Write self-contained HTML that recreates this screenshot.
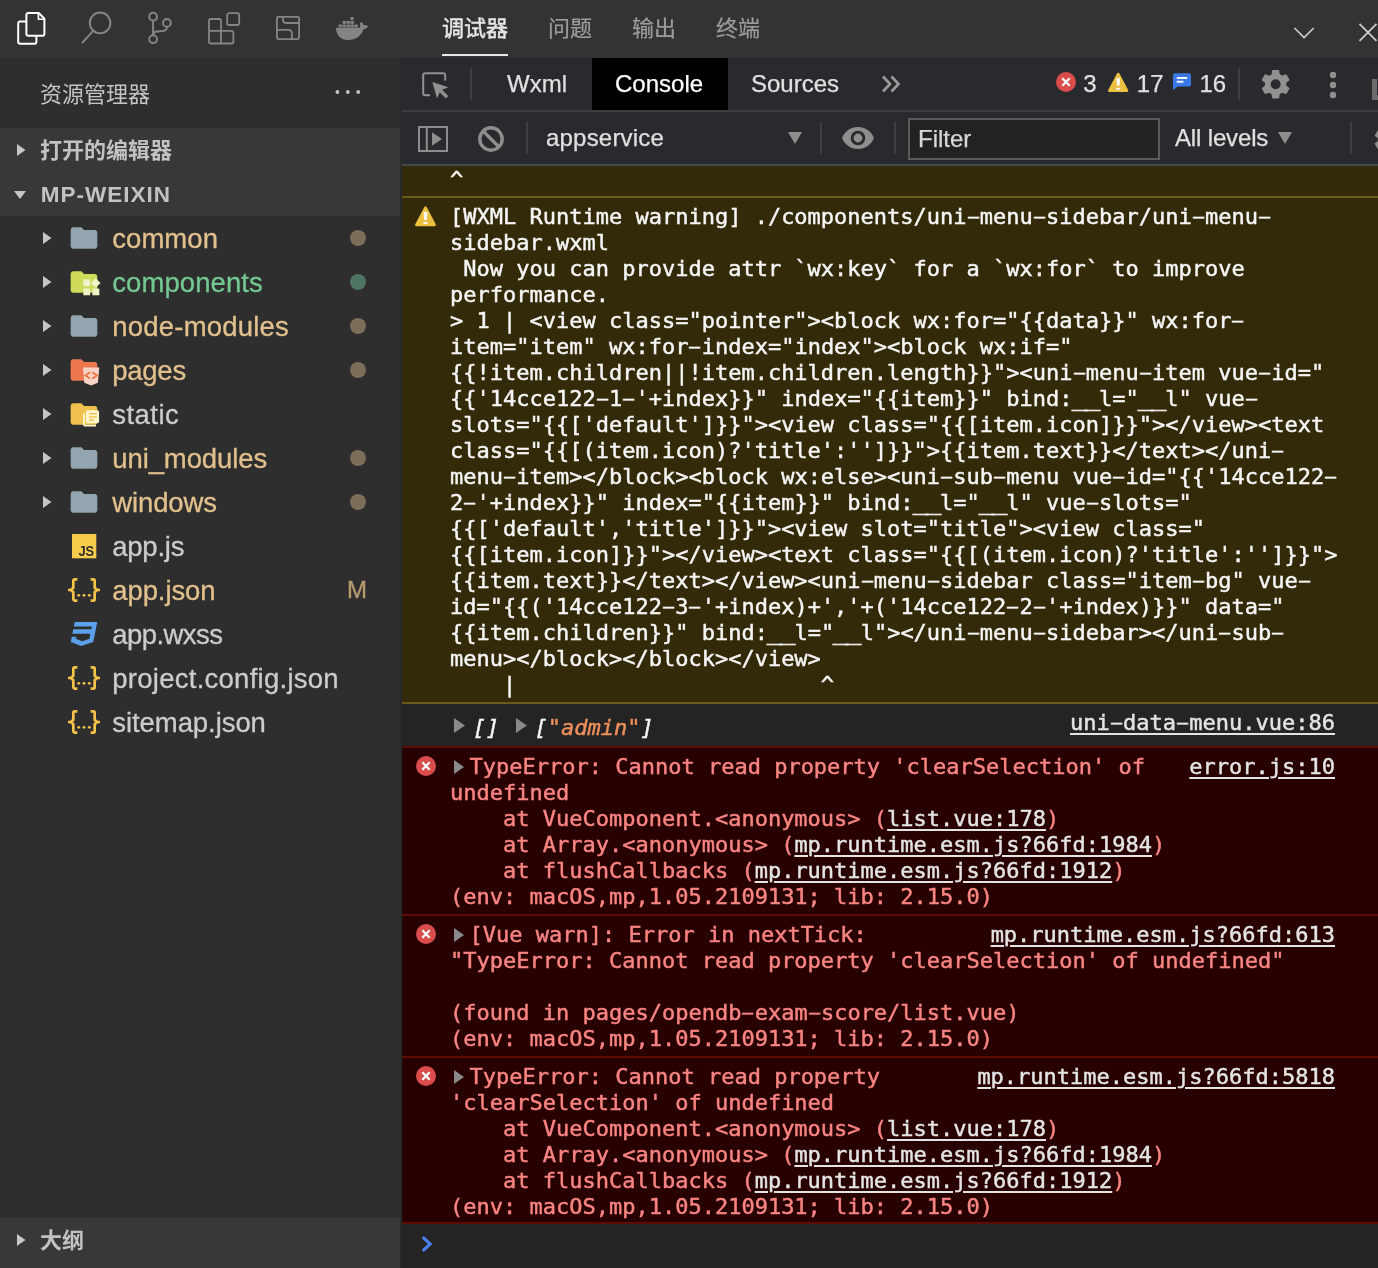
<!DOCTYPE html>
<html lang="zh-CN">
<head>
<meta charset="utf-8">
<title>微信开发者工具</title>
<style>
*{box-sizing:border-box;margin:0;padding:0}
html,body{width:1378px;height:1268px;overflow:hidden;background:#2e2e2e}
body{position:relative;font-family:"Liberation Sans","Noto Sans CJK SC",sans-serif;color:#ccc}
.abs{position:absolute}
svg{display:block;position:absolute;overflow:visible}
#topbar,#side,#dev{will-change:transform}
/* ---------- top bar ---------- */
#topbar{position:absolute;left:0;top:0;width:1378px;height:58px;background:#333333}
.ptab{position:absolute;top:13px;-webkit-text-stroke:0.2px currentColor;height:32px;line-height:32px;font-size:22px;color:#9d9d9d;white-space:nowrap}
.ptab.on{color:#e7e7e7;-webkit-text-stroke:0.45px currentColor}
#ptline{position:absolute;left:442px;top:54px;width:66px;height:2px;background:#e7e7e7}
/* ---------- sidebar ---------- */
#side{position:absolute;left:0;top:58px;width:400px;height:1210px;background:#2e2e2e}
#sidetitle{position:absolute;left:40px;top:21px;height:32px;line-height:32px;font-size:22px;color:#c5c5c5;white-space:nowrap}
.sec{position:absolute;left:0;width:400px;height:44px;background:#383838}
.sec .lbl{position:absolute;left:40px;top:7px;height:32px;line-height:32px;font-size:22px;font-weight:bold;color:#c2c2c2;white-space:nowrap}
.row{position:absolute;left:0;width:400px;height:44px}
.row .nm{-webkit-text-stroke:0.3px currentColor;position:absolute;left:112.3px;top:5px;height:36px;line-height:36px;font-size:27.5px;white-space:nowrap;color:#cccccc}
.row.m .nm{color:#e2c08d}
.row.u .nm{color:#73c991}
.dot{position:absolute;left:350px;top:14px;width:16px;height:16px;border-radius:50%;background:#7c6d58}
.row.u .dot{background:#4d7562}
.badge{position:absolute;left:347px;-webkit-text-stroke:0.3px #b89b6e;top:4px;height:36px;line-height:36px;font-size:24px;color:#b89b6e}
/* ---------- devtools ---------- */
#gap{position:absolute;left:400px;top:58px;width:2px;height:1210px;background:#292a2a}
#dev{position:absolute;left:402px;top:58px;width:976px;height:1210px;background:#242424;overflow:hidden}
#tabs{position:absolute;left:0;top:0;width:976px;height:54px;background:#292a2d;border-bottom:2px solid #3d3d3d}
#tools{position:absolute;left:0;top:54px;width:976px;height:54px;background:#292a2d;border-bottom:2px solid #46474a}
.dt{-webkit-text-stroke:0.25px currentColor;position:absolute;top:8px;height:36px;line-height:36px;font-size:24px;color:#e0e0e0;white-space:nowrap}
.mono{-webkit-text-stroke:0.45px currentColor;font-family:"DejaVu Sans Mono","Liberation Mono",monospace;font-size:22px;line-height:26px;white-space:pre}
.msg{position:absolute;left:0;width:976px;border-top:2px solid transparent;border-bottom:2px solid transparent}
.msg svg,.msg .tx,.msg .rl{margin-top:-2px}
.msg.warn{background:#322a08;border-color:#6c5c1c}
.msg.notop{border-top-color:transparent;background-clip:padding-box}
.msg.err{background:#280000;border-color:#5c0c04}
.msg.log{background:#242424;border-color:transparent}
.msg .tx{position:absolute;color:#f6f6f6}
.msg.err .tx{color:#f98583}
.msg .rl{position:absolute;right:43px;color:#e4e4e4}
.lk{color:#e4e4e4;text-decoration:underline;text-decoration-thickness:2px;text-underline-offset:3px}
.lkbg{text-decoration:none;background:linear-gradient(#e4e4e4,#e4e4e4) no-repeat 0 23px/100% 2px}
.str{color:#ee8f5a}
.arw{display:inline-block;position:relative;height:0;vertical-align:baseline}
.arw svg{margin-top:0}
i{font-style:italic}
.hy{display:inline-block;transform:scale(1.9,.72)}
.us{display:inline-block;transform:scaleX(1.18)}
</style>
</head>
<body>
<div id="topbar">
  <svg style="left:16px;top:10.6px" width="30" height="34" viewBox="0 0 30 34" ><g fill="none" stroke="#ffffff" stroke-width="2" stroke-linejoin="round"><path d="M10.4 10.400H4.200a2 2 0 0 0-2 2v18.400a2 2 0 0 0 2 2h14.200a2 2 0 0 0 2-2v-5.600"/><path d="M12.400 2h10.400l5.600 5.800v15a2 2 0 0 1-2 2H12.400a2 2 0 0 1-2-2V4a2 2 0 0 1 2-2z"/><path d="M22.400 2.400v5.800h5.600" stroke-width="1.6"/></g></svg>
  <svg style="left:78px;top:8px" width="40" height="40" viewBox="0 0 40 40" ><g fill="none" stroke="#858585" stroke-width="2"><circle cx="22.1" cy="14.9" r="10.3"/><path d="M14.900 23.100L4 35.100"/></g></svg>
  <svg style="left:140px;top:8px" width="40" height="40" viewBox="0 0 40 40" ><g fill="none" stroke="#858585" stroke-width="2"><circle cx="13.1" cy="8.700" r="3.9"/><circle cx="26.9" cy="14.9" r="3.9"/><circle cx="13.1" cy="31.200" r="3.9"/><path d="M13.1 12.600V27.300"/><path d="M26.900 18.800c0 4.400-3.600 4.400-7 4.400s-6.800 0-6.800 4"/></g></svg>
  <svg style="left:200px;top:8px" width="48" height="40" viewBox="0 0 48 40" ><g fill="none" stroke="#858585" stroke-width="1.8" stroke-linejoin="round"><path d="M11 11h8a2 2 0 0 1 2 2v9.900h10.400a2 2 0 0 1 2 2v8.600a2 2 0 0 1-2 2H11a2 2 0 0 1-2-2V13a2 2 0 0 1 2-2z"/><path d="M21 22.900H9M21 22.900V35.500"/><rect x="27.200" y="5.200" width="12" height="11.800" rx="2"/></g></svg>
  <svg style="left:270px;top:10px" width="36" height="36" viewBox="0 0 36 36" ><g fill="none" stroke="#858585" stroke-width="1.8" stroke-linejoin="round"><rect x="6.900" y="6.900" width="22.200" height="22.200" rx="1.500"/><path d="M13 6.900v2.500c0 2.300 1.600 3.600 3.800 3.600H29.100"/><path d="M6.900 19.800h11.300c2.300 0 3.700 1.500 3.700 3.700v5.600"/></g></svg>
  <svg style="left:334px;top:14px" width="36" height="28" viewBox="0 0 36 28" ><g fill="#848484"><path d="M1.900 13.700H25.700C26.500 12.600 26.300 10.500 25.900 9.300C26.300 8.500 27 8 27.600 7.900C28.600 8.800 29.200 10 29.300 11.200C30.800 10.800 32.800 11.200 34 12.500C33 14.300 31 15.100 29.500 15.200C27.500 21.500 22 26 13.900 26C6.500 26 2.200 21 1.900 13.700z"/><rect x="4.6" y="10.5" width="3.400" height="2.900"/><rect x="8.55" y="10.5" width="3.400" height="2.900"/><rect x="12.5" y="10.5" width="3.400" height="2.900"/><rect x="16.45" y="10.5" width="3.400" height="2.900"/><rect x="20.4" y="10.5" width="3.400" height="2.900"/><rect x="8.55" y="6.95" width="3.400" height="2.900"/><rect x="12.5" y="6.95" width="3.400" height="2.900"/><rect x="16.45" y="6.95" width="3.400" height="2.900"/><rect x="16.3" y="3.1" width="3.400" height="2.900"/></g></svg>
  <svg style="left:1292px;top:24px" width="24" height="18" viewBox="0 0 24 18" ><path d="M2.500 4l9.600 9.600L21.700 4" fill="none" stroke="#d0d0d0" stroke-width="1.6"/></svg>
  <svg style="left:1358px;top:22px" width="20" height="20" viewBox="0 0 20 20" ><path d="M1.500 1.800l17 17M18.500 1.800l-17 17" fill="none" stroke="#d0d0d0" stroke-width="1.7"/></svg>
  <div class="ptab on" style="left:442px">调试器</div>
  <div class="ptab" style="left:548px">问题</div>
  <div class="ptab" style="left:632px">输出</div>
  <div class="ptab" style="left:716px">终端</div>
  <div id="ptline"></div>
</div>

<div id="side">
  <div id="sidetitle">资源管理器</div>
  <div class="sec" style="top:70px"><svg style="left:17px;top:16.0px" width="8.5" height="12" viewBox="0 0 8.5 12" ><path d="M0 0L8.5 6.0L0 12z" fill="#c5c5c5"/></svg><div class="lbl">打开的编辑器</div></div>
  <div class="sec" style="top:114px"><svg style="left:14px;top:18.8px" width="12" height="8" viewBox="0 0 12 8" ><path d="M0 0H12L6.0 8z" fill="#c5c5c5"/></svg><div class="lbl" style="letter-spacing:1px;font-size:22.5px;left:40.8px">MP-WEIXIN</div></div>
  <svg style="left:334px;top:31px" width="28" height="6" viewBox="0 0 28 6" ><g fill="#c5c5c5"><circle cx="3.4" cy="3" r="1.9"/><circle cx="13.8" cy="3" r="1.9"/><circle cx="24.2" cy="3" r="1.9"/></g></svg>
  <div class="row m" style="top:158px"><svg style="left:42.7px;top:16.0px" width="8.5" height="12" viewBox="0 0 8.5 12" ><path d="M0 0L8.5 6.0L0 12z" fill="#c5c5c5"/></svg><svg style="left:68px;top:5.6px" width="32" height="32" viewBox="0 0 24 24" ><path d="M10 4H4c-1.11 0-2 .89-2 2v12c0 1.1.9 2 2 2h16c1.1 0 2-.9 2-2V8c0-1.11-.9-2-2-2h-8l-2-2z" fill="#92a5b0"/></svg><div class="nm" style="letter-spacing:0.04px">common</div><div class="dot"></div></div>
  <div class="row u" style="top:202px"><svg style="left:42.7px;top:16.0px" width="8.5" height="12" viewBox="0 0 8.5 12" ><path d="M0 0L8.5 6.0L0 12z" fill="#c5c5c5"/></svg><svg style="left:68px;top:5.6px" width="32" height="32" viewBox="0 0 24 24" ><path d="M10 4H4c-1.11 0-2 .89-2 2v12c0 1.1.9 2 2 2h16c1.1 0 2-.9 2-2V8c0-1.11-.9-2-2-2h-8l-2-2z" fill="#cfdb5a"/><g fill="#f0f4c8"><rect x="11.500" y="10.100" width="5.100" height="5.050"/><rect x="11.500" y="16.900" width="5.100" height="5.050"/><rect x="18.300" y="16.900" width="5.200" height="5.050"/><path d="M20.800 9.100l3.600 3.600-3.600 3.600-3.600-3.600z"/></g></svg><div class="nm" style="letter-spacing:0.07px">components</div><div class="dot"></div></div>
  <div class="row m" style="top:246px"><svg style="left:42.7px;top:16.0px" width="8.5" height="12" viewBox="0 0 8.5 12" ><path d="M0 0L8.5 6.0L0 12z" fill="#c5c5c5"/></svg><svg style="left:68px;top:5.6px" width="32" height="32" viewBox="0 0 24 24" ><path d="M10 4H4c-1.11 0-2 .89-2 2v12c0 1.1.9 2 2 2h16c1.1 0 2-.9 2-2V8c0-1.11-.9-2-2-2h-8l-2-2z" fill="#92a5b0"/></svg><div class="nm" style="letter-spacing:0.2px">node-modules</div><div class="dot"></div></div>
  <div class="row m" style="top:290px"><svg style="left:42.7px;top:16.0px" width="8.5" height="12" viewBox="0 0 8.5 12" ><path d="M0 0L8.5 6.0L0 12z" fill="#c5c5c5"/></svg><svg style="left:68px;top:5.6px" width="32" height="32" viewBox="0 0 24 24" ><path d="M10 4H4c-1.11 0-2 .89-2 2v12c0 1.1.9 2 2 2h16c1.1 0 2-.9 2-2V8c0-1.11-.9-2-2-2h-8l-2-2z" fill="#ed7850"/><path d="M11.250 10.100H23.500L22.400 21.500 17.400 23.600 12.200 21.500z" fill="#f8d2c4"/><path d="M16.600 13.700l-3.600 2.400 3.600 2.400M18.200 13.700l3.600 2.400-3.600 2.400" fill="none" stroke="#ed7040" stroke-width="1.250"/></svg><div class="nm" style="letter-spacing:-0.27px">pages</div><div class="dot"></div></div>
  <div class="row " style="top:334px"><svg style="left:42.7px;top:16.0px" width="8.5" height="12" viewBox="0 0 8.5 12" ><path d="M0 0L8.5 6.0L0 12z" fill="#c5c5c5"/></svg><svg style="left:68px;top:5.6px" width="32" height="32" viewBox="0 0 24 24" ><path d="M10 4H4c-1.11 0-2 .89-2 2v12c0 1.1.9 2 2 2h16c1.1 0 2-.9 2-2V8c0-1.11-.9-2-2-2h-8l-2-2z" fill="#f0c14e"/><g fill="#fdf7cb"><path d="M11.250 11.550h1.450v8.550h8.300v1.200h-8.350a1.400 1.400 0 0 1-1.400-1.400z"/><rect x="13.500" y="9.200" width="9.800" height="9.700" rx="1.300"/></g><g fill="#f0c14e"><rect x="15.750" y="11.250" width="5.850" height="1.050"/><rect x="15.750" y="13.700" width="5.850" height="1.050"/><rect x="15.750" y="16.050" width="3.600" height="1.050"/></g></svg><div class="nm" style="letter-spacing:0.44px">static</div></div>
  <div class="row m" style="top:378px"><svg style="left:42.7px;top:16.0px" width="8.5" height="12" viewBox="0 0 8.5 12" ><path d="M0 0L8.5 6.0L0 12z" fill="#c5c5c5"/></svg><svg style="left:68px;top:5.6px" width="32" height="32" viewBox="0 0 24 24" ><path d="M10 4H4c-1.11 0-2 .89-2 2v12c0 1.1.9 2 2 2h16c1.1 0 2-.9 2-2V8c0-1.11-.9-2-2-2h-8l-2-2z" fill="#92a5b0"/></svg><div class="nm" style="letter-spacing:-0.11px">uni_modules</div><div class="dot"></div></div>
  <div class="row m" style="top:422px"><svg style="left:42.7px;top:16.0px" width="8.5" height="12" viewBox="0 0 8.5 12" ><path d="M0 0L8.5 6.0L0 12z" fill="#c5c5c5"/></svg><svg style="left:68px;top:5.6px" width="32" height="32" viewBox="0 0 24 24" ><path d="M10 4H4c-1.11 0-2 .89-2 2v12c0 1.1.9 2 2 2h16c1.1 0 2-.9 2-2V8c0-1.11-.9-2-2-2h-8l-2-2z" fill="#92a5b0"/></svg><div class="nm" style="letter-spacing:-0.12px">windows</div><div class="dot"></div></div>
  <div class="row " style="top:466px"><svg style="left:72px;top:9.8px" width="24.3" height="24.3" viewBox="0 0 24 24" ><rect width="24" height="24" fill="#f8cd4e"/><text x="6.300" y="21.700" font-family="Liberation Sans,sans-serif" font-weight="bold" font-size="14.200" fill="#2e2e2e" textLength="15.600" lengthAdjust="spacingAndGlyphs">JS</text></svg><div class="nm" style="letter-spacing:-0.26px">app.js</div></div>
  <div class="row m" style="top:510px"><svg style="left:68px;top:5.6px" width="32" height="32" viewBox="0 0 24 24" ><path d="M5 3h2v2H5v5a2 2 0 0 1-2 2 2 2 0 0 1 2 2v5h2v2H5c-1.070-.270-2-.9-2-2v-4a2 2 0 0 0-2-2H0v-2h1a2 2 0 0 0 2-2V5a2 2 0 0 1 2-2m14 0a2 2 0 0 1 2 2v4a2 2 0 0 0 2 2h1v2h-1a2 2 0 0 0-2 2v4a2 2 0 0 1-2 2h-2v-2h2v-5a2 2 0 0 1 2-2 2 2 0 0 1-2-2V5h-2V3h2z" fill="#f4c348"/><g fill="#f4c348"><circle cx="8" cy="16" r="1.050"/><circle cx="12" cy="16" r="1.050"/><circle cx="16" cy="16" r="1.050"/></g></svg><div class="nm" style="letter-spacing:-0.11px">app.json</div><div class="badge">M</div></div>
  <div class="row " style="top:554px"><svg style="left:68px;top:5.8px" width="32" height="32" viewBox="0 0 24 24" ><path d="M5 3l-.650 3.340h13.590L17.500 8.500H3.920l-.660 3.330h13.590l-.760 3.810-5.480 1.810-4.750-1.810.330-1.640H2.850l-.790 4 7.850 3 9.050-3 1.200-6.030.240-1.210L21.940 3H5z" fill="#5ba0e8"/></svg><div class="nm" style="letter-spacing:-0.57px">app.wxss</div></div>
  <div class="row " style="top:598px"><svg style="left:68px;top:5.6px" width="32" height="32" viewBox="0 0 24 24" ><path d="M5 3h2v2H5v5a2 2 0 0 1-2 2 2 2 0 0 1 2 2v5h2v2H5c-1.070-.270-2-.9-2-2v-4a2 2 0 0 0-2-2H0v-2h1a2 2 0 0 0 2-2V5a2 2 0 0 1 2-2m14 0a2 2 0 0 1 2 2v4a2 2 0 0 0 2 2h1v2h-1a2 2 0 0 0-2 2v4a2 2 0 0 1-2 2h-2v-2h2v-5a2 2 0 0 1 2-2 2 2 0 0 1-2-2V5h-2V3h2z" fill="#f4c348"/><g fill="#f4c348"><circle cx="8" cy="16" r="1.050"/><circle cx="12" cy="16" r="1.050"/><circle cx="16" cy="16" r="1.050"/></g></svg><div class="nm" style="letter-spacing:0.26px">project.config.json</div></div>
  <div class="row " style="top:642px"><svg style="left:68px;top:5.6px" width="32" height="32" viewBox="0 0 24 24" ><path d="M5 3h2v2H5v5a2 2 0 0 1-2 2 2 2 0 0 1 2 2v5h2v2H5c-1.070-.270-2-.9-2-2v-4a2 2 0 0 0-2-2H0v-2h1a2 2 0 0 0 2-2V5a2 2 0 0 1 2-2m14 0a2 2 0 0 1 2 2v4a2 2 0 0 0 2 2h1v2h-1a2 2 0 0 0-2 2v4a2 2 0 0 1-2 2h-2v-2h2v-5a2 2 0 0 1 2-2 2 2 0 0 1-2-2V5h-2V3h2z" fill="#f4c348"/><g fill="#f4c348"><circle cx="8" cy="16" r="1.050"/><circle cx="12" cy="16" r="1.050"/><circle cx="16" cy="16" r="1.050"/></g></svg><div class="nm" style="letter-spacing:-0.07px">sitemap.json</div></div>
  <div class="sec" style="top:1160px;height:50px"><svg style="left:17px;top:16.0px" width="8.5" height="12" viewBox="0 0 8.5 12" ><path d="M0 0L8.5 6.0L0 12z" fill="#c5c5c5"/></svg><div class="lbl">大纲</div></div>
</div>

<div id="gap"></div>
<div id="dev">
  <div id="tabs">
    <svg style="left:18px;top:12px" width="30" height="30" viewBox="0 0 30 30" ><path d="M25.200 10.500V5.200a2 2 0 0 0-2-2H5.200a2 2 0 0 0-2 2v18a2 2 0 0 0 2 2h4.800" fill="none" stroke="#919191" stroke-width="2"/><path d="M12.300 12l16 5.200-6.200 2.600 6.200 6.200-2.400 2.400-6.200-6.200-2.600 6.200z" fill="#919191"/></svg>
    <div class="abs" style="left:68px;top:10px;width:2px;height:32px;background:#3d3e41"></div>
    <div class="dt" style="left:105px">Wxml</div>
    <div class="abs" style="left:190px;top:0;width:136px;height:52px;background:#000"></div>
    <div class="dt" style="left:213px;color:#fff">Console</div>
    <div class="dt" style="left:349px">Sources</div>
    <svg style="left:479px;top:17px" width="20" height="18" viewBox="0 0 20 18" ><path d="M2 1.500l7 7.500-7 7.500M10.500 1.500l7 7.500-7 7.500" fill="none" stroke="#9a9a9a" stroke-width="2.700"/></svg>
    <svg style="left:654px;top:14px" width="20" height="20" viewBox="0 0 20 20" ><circle cx="10" cy="10" r="10" fill="#db4c4c"/><path d="M6.300 6.300l7.400 7.400M13.700 6.300l-7.400 7.400" stroke="#fff" stroke-width="2.300" fill="none"/></svg>
    <div class="dt" style="left:681.2px">3</div>
    <svg style="left:705.7px;top:13.6px" width="20.4" height="21" viewBox="0 0 21 21" ><path d="M10.500 1.700L19.600 18.900H1.400z" fill="#ecc040" stroke="#ecc040" stroke-width="2.600" stroke-linejoin="round"/><path d="M8.500 6h4l-.700 7.900H9.200z" fill="#fff"/><rect x="8.500" y="16" width="4" height="1.900" fill="#fff"/></svg>
    <div class="dt" style="left:734.8px">17</div>
    <svg style="left:770.5px;top:15px" width="18" height="17.5" viewBox="0 0 19 18" ><path d="M2 0h15a2 2 0 0 1 2 2v10a2 2 0 0 1-2 2H5l-5 4V2a2 2 0 0 1 2-2z" fill="#3b78e7"/><rect x="4" y="4" width="11" height="2" fill="#fff"/><rect x="4" y="8" width="7" height="2" fill="#fff"/></svg>
    <div class="dt" style="left:797.5px">16</div>
    <div class="abs" style="left:836px;top:10px;width:2px;height:32px;background:#3d3e41"></div>
    <svg style="left:858.9px;top:11.8px" width="29.3" height="28.4" viewBox="0 -0.200 29.300 28.400" ><path d="M25.200 15.400c.06-.45.09-.92.09-1.400s-.03-.95-.1-1.400l3-2.350c.27-.2.340-.6.170-.9l-2.850-4.930c-.170-.3-.540-.410-.850-.3l-3.540 1.420a10.400 10.400 0 0 0-2.400-1.400l-.540-3.770A.700.700 0 0 0 17.500-.2h-5.700c-.350 0-.650.260-.700.600l-.530 3.780c-.870.360-1.670.840-2.400 1.400L4.600 4.140c-.320-.12-.680 0-.850.300L.900 9.380c-.180.300-.1.700.170.900l3 2.340c-.06.450-.1.930-.1 1.400s.040.950.1 1.400l-3 2.350c-.270.200-.340.600-.170.900l2.850 4.930c.170.300.540.410.850.300l3.540-1.420c.740.570 1.540 1.040 2.400 1.400l.540 3.770c.050.340.350.600.700.600h5.700c.350 0 .650-.260.700-.600l.530-3.780c.870-.360 1.670-.840 2.400-1.400l3.550 1.430c.320.120.680 0 .850-.300l2.850-4.930c.170-.300.100-.700-.170-.900l-3-2.350zM14.650 19a5 5 0 1 1 0-10 5 5 0 0 1 0 10z" fill="#919191"/></svg>
    <svg style="left:927px;top:13px" width="8" height="28" viewBox="0 0 8 28" ><g fill="#919191"><circle cx="4" cy="4" r="3.200"/><circle cx="4" cy="14" r="3.200"/><circle cx="4" cy="24" r="3.200"/></g></svg>
    <div class="abs" style="left:970px;top:20.5px;width:5px;height:21.200px;background:#6b6b6b"></div>
    <div class="abs" style="left:970px;top:36.5px;width:6px;height:5.200px;background:#6b6b6b"></div>
  </div>
  <div id="tools">
    <svg style="left:16px;top:14px" width="30" height="26" viewBox="0 0 30 26" ><path d="M1 1h28v24H1zM8.800 1v24" fill="none" stroke="#8e8e8e" stroke-width="2"/><path d="M14 6.300l10 6.700-10 6.700z" fill="#8e8e8e"/></svg>
    <svg style="left:76px;top:14px" width="26" height="26" viewBox="0 0 26 26" ><circle cx="13" cy="13" r="11.200" fill="none" stroke="#8e8e8e" stroke-width="3.400"/><path d="M5 5l16 16" stroke="#8e8e8e" stroke-width="3.400"/></svg>
    <div class="abs" style="left:124px;top:10px;width:2px;height:32px;background:#3d3e41"></div>
    <div class="dt" style="left:144px;top:8px;letter-spacing:0.2px">appservice</div>
    <svg style="left:386px;top:19.7px" width="14" height="12" viewBox="0 0 14 12" ><path d="M0 0H14L7.0 12z" fill="#8e8e8e"/></svg>
    <div class="abs" style="left:418px;top:10px;width:2px;height:32px;background:#3d3e41"></div>
    <svg style="left:440px;top:15px" width="32" height="22" viewBox="0 0 32 22" ><path d="M16 0C8.700 0 2.500 4.500 0 11c2.500 6.500 8.700 11 16 11s13.500-4.500 16-11C29.500 4.500 23.300 0 16 0zm0 18.300a7.300 7.300 0 1 1 0-14.600 7.300 7.300 0 0 1 0 14.600zm0-11.700a4.400 4.400 0 1 0 0 8.800 4.400 4.400 0 0 0 0-8.800z" fill="#8e8e8e"/></svg>
    <div class="abs" style="left:492px;top:10px;width:2px;height:32px;background:#3d3e41"></div>
    <div class="abs" style="left:506px;top:6px;width:252px;height:42px;background:#222222;border:2px solid #5b5b5b"></div>
    <div class="dt" style="left:516px;top:9px;color:#d8d8d8">Filter</div>
    <div class="dt" style="left:773px;top:8px;letter-spacing:-0.15px">All levels</div>
    <svg style="left:875.5px;top:19.7px" width="14" height="12" viewBox="0 0 14 12" ><path d="M0 0H14L7.0 12z" fill="#8e8e8e"/></svg>
    <div class="abs" style="left:948px;top:10px;width:2px;height:32px;background:#3d3e41"></div>
    <svg style="left:971.5px;top:13.5px" width="28" height="27.2" viewBox="0 -0.200 29.300 28.400" ><path d="M25.200 15.400c.06-.45.09-.92.09-1.400s-.03-.95-.1-1.400l3-2.350c.27-.2.340-.6.170-.9l-2.850-4.930c-.170-.3-.540-.410-.850-.3l-3.540 1.420a10.400 10.400 0 0 0-2.400-1.400l-.540-3.770A.700.700 0 0 0 17.500-.2h-5.700c-.350 0-.650.260-.700.600l-.530 3.780c-.870.360-1.670.840-2.400 1.400L4.600 4.140c-.320-.12-.680 0-.850.300L.900 9.380c-.180.300-.1.700.170.900l3 2.340c-.06.450-.1.930-.1 1.400s.040.950.1 1.400l-3 2.350c-.270.200-.340.600-.170.900l2.850 4.930c.170.300.540.410.850.300l3.540-1.420c.740.570 1.540 1.040 2.400 1.400l.540 3.770c.050.340.350.600.700.600h5.700c.350 0 .650-.260.700-.600l.530-3.780c.870-.360 1.670-.840 2.400-1.400l3.550 1.430c.320.120.680 0 .850-.300l2.850-4.930c.170-.300.100-.700-.170-.900l-3-2.350zM14.650 19a5 5 0 1 1 0-10 5 5 0 0 1 0 10z" fill="#8e8e8e"/></svg>
  </div>
  <div class="msg warn notop" style="top:106px;height:34px"><div class="mono tx " style="left:48px;top:3px">^</div></div>
  <div class="msg warn" style="top:138px;height:508px"><svg style="left:13px;top:10px" width="21" height="21" viewBox="0 0 21 21" ><path d="M10.500 1.700L19.600 18.900H1.400z" fill="#ecc040" stroke="#ecc040" stroke-width="2.600" stroke-linejoin="round"/><path d="M8.500 6h4l-.700 7.900H9.200z" fill="#fff"/><rect x="8.500" y="16" width="4" height="1.900" fill="#fff"/></svg><div class="mono tx " style="left:48px;top:8px">[WXML Runtime warning] ./components/uni<span class="hy">-</span>menu<span class="hy">-</span>sidebar/uni<span class="hy">-</span>menu<span class="hy">-</span>
sidebar.wxml
 Now you can provide attr `wx:key` for a `wx:for` to improve
performance.
&gt; 1 | &lt;view class=&quot;pointer&quot;&gt;&lt;block wx:for=&quot;{{data}}&quot; wx:for<span class="hy">-</span>
item=&quot;item&quot; wx:for<span class="hy">-</span>index=&quot;index&quot;&gt;&lt;block wx:if=&quot;
{{!item.children||!item.children.length}}&quot;&gt;&lt;uni<span class="hy">-</span>menu<span class="hy">-</span>item vue<span class="hy">-</span>id=&quot;
{{&#x27;14cce122<span class="hy">-</span>1<span class="hy">-</span>&#x27;+index}}&quot; index=&quot;{{item}}&quot; bind:<span class="us">_</span><span class="us">_</span>l=&quot;<span class="us">_</span><span class="us">_</span>l&quot; vue<span class="hy">-</span>
slots=&quot;{{[&#x27;default&#x27;]}}&quot;&gt;&lt;view class=&quot;{{[item.icon]}}&quot;&gt;&lt;/view&gt;&lt;text
class=&quot;{{[(item.icon)?&#x27;title&#x27;:&#x27;&#x27;]}}&quot;&gt;{{item.text}}&lt;/text&gt;&lt;/uni<span class="hy">-</span>
menu<span class="hy">-</span>item&gt;&lt;/block&gt;&lt;block wx:else&gt;&lt;uni<span class="hy">-</span>sub<span class="hy">-</span>menu vue<span class="hy">-</span>id=&quot;{{&#x27;14cce122<span class="hy">-</span>
2<span class="hy">-</span>&#x27;+index}}&quot; index=&quot;{{item}}&quot; bind:<span class="us">_</span><span class="us">_</span>l=&quot;<span class="us">_</span><span class="us">_</span>l&quot; vue<span class="hy">-</span>slots=&quot;
{{[&#x27;default&#x27;,&#x27;title&#x27;]}}&quot;&gt;&lt;view slot=&quot;title&quot;&gt;&lt;view class=&quot;
{{[item.icon]}}&quot;&gt;&lt;/view&gt;&lt;text class=&quot;{{[(item.icon)?&#x27;title&#x27;:&#x27;&#x27;]}}&quot;&gt;
{{item.text}}&lt;/text&gt;&lt;/view&gt;&lt;uni<span class="hy">-</span>menu<span class="hy">-</span>sidebar class=&quot;item<span class="hy">-</span>bg&quot; vue<span class="hy">-</span>
id=&quot;{{(&#x27;14cce122<span class="hy">-</span>3<span class="hy">-</span>&#x27;+index)+&#x27;,&#x27;+(&#x27;14cce122<span class="hy">-</span>2<span class="hy">-</span>&#x27;+index)}}&quot; data=&quot;
{{item.children}}&quot; bind:<span class="us">_</span><span class="us">_</span>l=&quot;<span class="us">_</span><span class="us">_</span>l&quot;&gt;&lt;/uni<span class="hy">-</span>menu<span class="hy">-</span>sidebar&gt;&lt;/uni<span class="hy">-</span>sub<span class="hy">-</span>
menu&gt;&lt;/block&gt;&lt;/block&gt;&lt;/view&gt;
    |                       ^</div></div>
  <div class="msg log" style="top:646px;height:42px"><div class="mono tx " style="left:48px;top:10.5px"><span class="arw" style="width:22.7px"><svg style="left:3.5px;top:-16.5px" width="11" height="15" viewBox="0 0 11 15"><path d="M0 0L11 7.5L0 15z" fill="#8a8a8a"/></svg></span><i>[]</i> <span class="arw" style="width:22px"><svg style="left:3.6px;top:-16.5px" width="11" height="15" viewBox="0 0 11 15"><path d="M0 0L11 7.5L0 15z" fill="#8a8a8a"/></svg></span><i>[<span class="str">"admin"</span>]</i></div><div class="mono rl" style="top:6px"><span class="lk lkbg">uni<span class="hy">-</span>data<span class="hy">-</span>menu.vue:86</span></div></div>
  <div class="msg err" style="top:688px;height:170px"><svg style="left:14px;top:10px" width="20" height="20" viewBox="0 0 20 20" ><circle cx="10" cy="10" r="10" fill="#db4c4c"/><path d="M6.300 6.300l7.400 7.400M13.700 6.300l-7.400 7.400" stroke="#fff" stroke-width="2.300" fill="none"/></svg><div class="mono tx " style="left:48px;top:8px"><span class="arw" style="width:19.5px"><svg style="left:3.5px;top:-14.5px" width="10" height="14" viewBox="0 0 10 14"><path d="M0 0L10 7.0L0 14z" fill="#8a8a8a"/></svg></span>TypeError: Cannot read property &#x27;clearSelection&#x27; of
undefined
    at VueComponent.&lt;anonymous&gt; (<span class="lk">list.vue:178</span>)
    at Array.&lt;anonymous&gt; (<span class="lk">mp.runtime.esm.js?66fd:1984</span>)
    at flushCallbacks (<span class="lk">mp.runtime.esm.js?66fd:1912</span>)
(env: macOS,mp,1.05.2109131; lib: 2.15.0)</div><div class="mono rl" style="top:8px"><span class="lk">error.js:10</span></div></div>
  <div class="msg err" style="top:856px;height:144px"><svg style="left:14px;top:10px" width="20" height="20" viewBox="0 0 20 20" ><circle cx="10" cy="10" r="10" fill="#db4c4c"/><path d="M6.300 6.300l7.400 7.400M13.700 6.300l-7.400 7.400" stroke="#fff" stroke-width="2.300" fill="none"/></svg><div class="mono tx " style="left:48px;top:8px"><span class="arw" style="width:19.5px"><svg style="left:3.5px;top:-14.5px" width="10" height="14" viewBox="0 0 10 14"><path d="M0 0L10 7.0L0 14z" fill="#8a8a8a"/></svg></span>[Vue warn]: Error in nextTick:
&quot;TypeError: Cannot read property &#x27;clearSelection&#x27; of undefined&quot;

(found in pages/opendb<span class="hy">-</span>exam<span class="hy">-</span>score/list.vue)
(env: macOS,mp,1.05.2109131; lib: 2.15.0)</div><div class="mono rl" style="top:8px"><span class="lk">mp.runtime.esm.js?66fd:613</span></div></div>
  <div class="msg err" style="top:998px;height:168px"><svg style="left:14px;top:10px" width="20" height="20" viewBox="0 0 20 20" ><circle cx="10" cy="10" r="10" fill="#db4c4c"/><path d="M6.300 6.300l7.400 7.400M13.700 6.300l-7.400 7.400" stroke="#fff" stroke-width="2.300" fill="none"/></svg><div class="mono tx " style="left:48px;top:8px"><span class="arw" style="width:19.5px"><svg style="left:3.5px;top:-14.5px" width="10" height="14" viewBox="0 0 10 14"><path d="M0 0L10 7.0L0 14z" fill="#8a8a8a"/></svg></span>TypeError: Cannot read property
&#x27;clearSelection&#x27; of undefined
    at VueComponent.&lt;anonymous&gt; (<span class="lk">list.vue:178</span>)
    at Array.&lt;anonymous&gt; (<span class="lk">mp.runtime.esm.js?66fd:1984</span>)
    at flushCallbacks (<span class="lk">mp.runtime.esm.js?66fd:1912</span>)
(env: macOS,mp,1.05.2109131; lib: 2.15.0)</div><div class="mono rl" style="top:8px"><span class="lk">mp.runtime.esm.js?66fd:5818</span></div></div>
  <svg style="left:19px;top:1178px" width="12" height="16" viewBox="0 0 12 16" ><path d="M1.800 1.200l7.400 6.800-7.400 6.800" fill="none" stroke="#4880ee" stroke-width="3.1"/></svg>
</div>
</body>
</html>
